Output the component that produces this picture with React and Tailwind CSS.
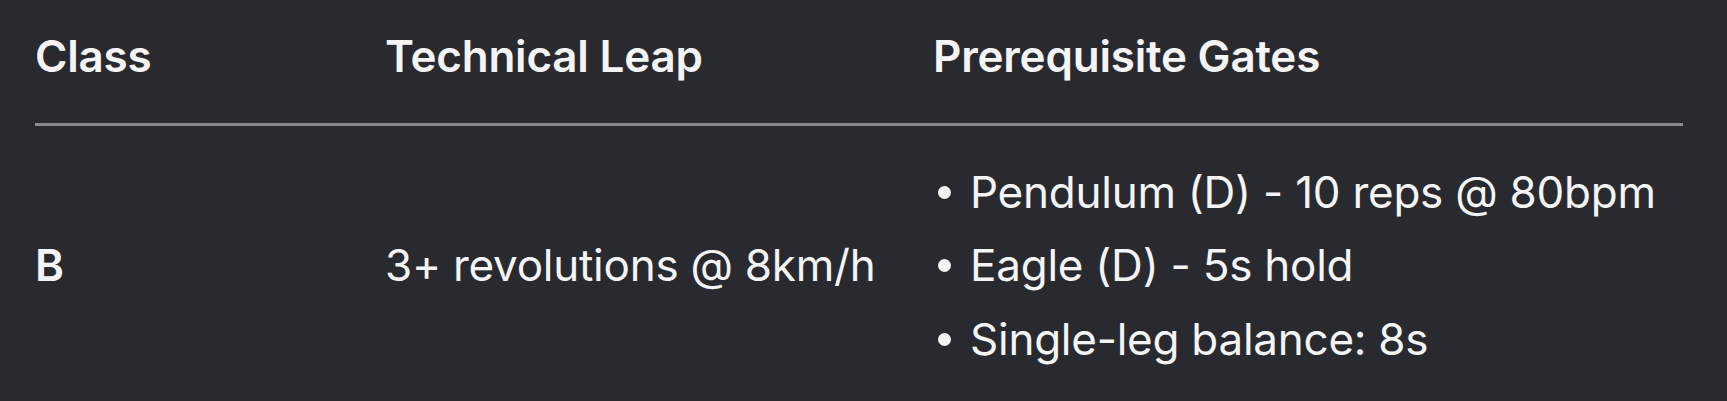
import React from 'react';

// Progression table: one class row with its leap and prerequisite gates
const rows = [
  {
    cls: 'B',
    leap: '3+ revolutions @ 8km/h',
    gates: [
      'Pendulum (D) - 10 reps @ 80bpm',
      'Eagle (D) - 5s hold',
      'Single-leg balance: 8s',
    ],
  },
];

const App = () => {
  return (
    <div
      className="min-h-screen w-full bg-[#292a2f] text-[#f4f4f5]"
      style={{ fontFamily: 'Inter, "Noto Sans", sans-serif' }}
    >
      <div className="pl-[35px] pr-[44px]">
        {/* Header row */}
        <div className="grid grid-cols-[350px_548px_1fr] border-b-[3px] border-[#8a8a8c] pt-[23px] pb-[34px] text-[44px] font-semibold leading-[66px] tracking-[-0.2px]">
          <div>Class</div>
          <div>Technical Leap</div>
          <div>Prerequisite Gates</div>
        </div>

        {/* Body rows */}
        {rows.map((row, i) => (
          <div
            key={i}
            className="grid grid-cols-[350px_548px_1fr] items-center pt-[30px] text-[44px] leading-[73.3px] tracking-[-0.25px]"
          >
            <div className="font-semibold">{row.cls}</div>
            <div>{row.leap}</div>
            <ul>
              {row.gates.map((gate, j) => (
                <li key={j} className="flex items-center">
                  <span className="ml-[5px] mr-[19px] h-[13px] w-[13px] shrink-0 rounded-full bg-[#f4f4f5]" />
                  <span>{gate}</span>
                </li>
              ))}
            </ul>
          </div>
        ))}
      </div>
    </div>
  );
};

export default App;
